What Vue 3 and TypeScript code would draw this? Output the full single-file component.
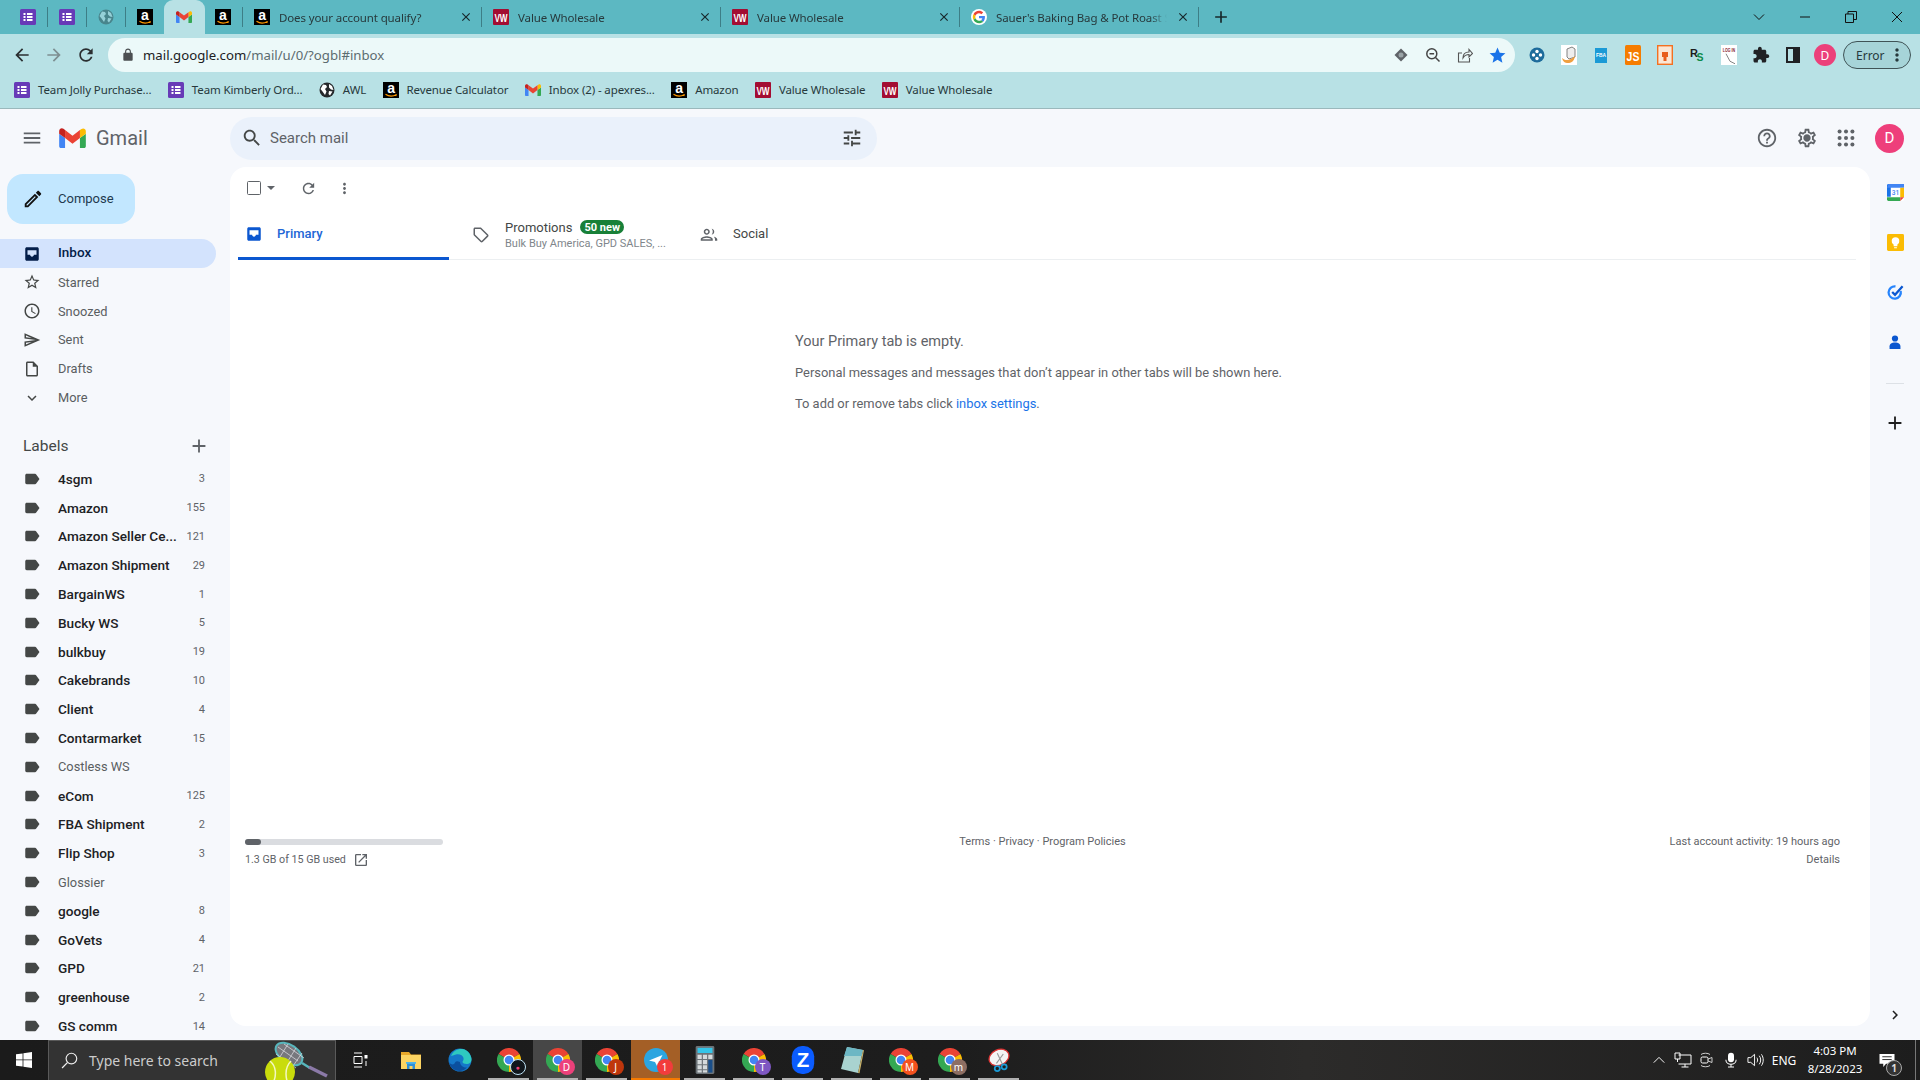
<script setup lang="ts">
const icons: Record<string, string> = {
  back: 'M20 11H7.83l5.59-5.59L12 4l-8 8 8 8 1.41-1.41L7.83 13H20v-2z',
  forward: 'M12 4l-1.41 1.41L16.17 11H4v2h12.17l-5.58 5.59L12 20l8-8z',
  reload: 'M17.65 6.35C16.2 4.9 14.21 4 12 4c-4.42 0-7.99 3.58-7.99 8s3.57 8 7.99 8c3.73 0 6.84-2.55 7.73-6h-2.08c-.82 2.33-3.04 4-5.65 4-3.31 0-6-2.69-6-6s2.69-6 6-6c1.66 0 3.14.69 4.22 1.78L13 11h7V4l-2.35 2.35z',
  lock: 'M18 8h-1V6c0-2.76-2.24-5-5-5S7 3.24 7 6v2H6c-1.1 0-2 .9-2 2v10c0 1.1.9 2 2 2h12c1.1 0 2-.9 2-2V10c0-1.1-.9-2-2-2zm-2.9 0H8.9V6c0-1.71 1.39-3.1 3.1-3.1 1.71 0 3.1 1.39 3.1 3.1v2z',
  star: 'M12 17.27L18.18 21l-1.64-7.03L22 9.24l-7.19-.61L12 2 9.19 8.63 2 9.24l5.46 4.73L5.82 21z',
  puzzle: 'M20.5 11H19V7c0-1.1-.9-2-2-2h-4V3.5C13 2.12 11.88 1 10.5 1S8 2.12 8 3.5V5H4c-1.1 0-1.99.9-1.99 2v3.8H3.5c1.49 0 2.7 1.21 2.7 2.7s-1.21 2.7-2.7 2.7H2V20c0 1.1.9 2 2 2h3.8v-1.5c0-1.49 1.21-2.7 2.7-2.7 1.49 0 2.7 1.21 2.7 2.7V22H17c1.1 0 2-.9 2-2v-4h1.5c1.38 0 2.5-1.12 2.5-2.5S21.88 11 20.5 11z',
  menu: 'M3 18h18v-2H3v2zm0-5h18v-2H3v2zm0-7v2h18V6H3z',
  search: 'M15.5 14h-.79l-.28-.27C15.41 12.59 16 11.11 16 9.5 16 5.91 13.09 3 9.5 3S3 5.91 3 9.5 5.91 16 9.5 16c1.61 0 3.09-.59 4.23-1.57l.27.28v.79l5 4.99L20.49 19l-4.99-5zm-6 0C7.01 14 5 11.99 5 9.5S7.01 5 9.5 5 14 7.01 14 9.5 11.99 14 9.5 14z',
  tune: 'M3 17v2h6v-2H3zM3 5v2h10V5H3zm10 16v-2h8v-2h-8v-2h-2v6h2zM7 9v2H3v2h4v2h2V9H7zm14 4v-2H11v2h10zm-6-4h2V7h4V5h-4V3h-2v6z',
  help: 'M11 18h2v-2h-2v2zm1-16C6.48 2 2 6.48 2 12s4.48 10 10 10 10-4.48 10-10S17.52 2 12 2zm0 18c-4.41 0-8-3.59-8-8s3.59-8 8-8 8 3.59 8 8-3.59 8-8 8zm0-14c-2.21 0-4 1.79-4 4h2c0-1.1.9-2 2-2s2 .9 2 2c0 2-3 1.75-3 5h2c0-2.25 3-2.5 3-5 0-2.21-1.79-4-4-4z',
  settings: 'M19.43 12.98c.04-.32.07-.64.07-.98 0-.34-.03-.66-.07-.98l2.11-1.65c.19-.15.24-.42.12-.64l-2-3.46c-.09-.16-.26-.25-.44-.25-.06 0-.12.01-.17.03l-2.49 1c-.52-.4-1.08-.73-1.69-.98l-.38-2.65C14.46 2.18 14.25 2 14 2h-4c-.25 0-.46.18-.49.42l-.38 2.65c-.61.25-1.17.59-1.69.98l-2.49-1c-.06-.02-.12-.03-.18-.03-.17 0-.34.09-.43.25l-2 3.46c-.13.22-.07.49.12.64l2.11 1.65c-.04.32-.07.65-.07.98 0 .33.03.66.07.98l-2.11 1.65c-.19.15-.24.42-.12.64l2 3.46c.09.16.26.25.44.25.06 0 .12-.01.17-.03l2.49-1c.52.4 1.08.73 1.69.98l.38 2.65c.03.24.24.42.49.42h4c.25 0 .46-.18.49-.42l.38-2.65c.61-.25 1.17-.59 1.69-.98l2.49 1c.06.02.12.03.18.03.17 0 .34-.09.43-.25l2-3.46c.12-.22.07-.49-.12-.64l-2.11-1.65zm-1.98-1.71c.04.31.05.52.05.73 0 .21-.02.43-.05.73l-.14 1.13.89.7 1.08.84-.7 1.21-1.27-.51-1.04-.42-.9.68c-.43.32-.84.56-1.25.73l-1.06.43-.16 1.13-.2 1.35h-1.4l-.19-1.35-.16-1.13-1.06-.43c-.43-.18-.83-.41-1.23-.71l-.91-.7-1.06.43-1.27.51-.7-1.21 1.08-.84.89-.7-.14-1.13c-.03-.31-.05-.54-.05-.74s.02-.43.05-.73l.14-1.13-.89-.7-1.08-.84.7-1.21 1.27.51 1.04.42.9-.68c.43-.32.84-.56 1.25-.73l1.06-.43.16-1.13.2-1.35h1.39l.19 1.35.16 1.13 1.06.43c.43.18.83.41 1.23.71l.91.7 1.06-.43 1.27-.51.7 1.21-1.07.85-.89.7.14 1.13zM12 8c-2.21 0-4 1.79-4 4s1.79 4 4 4 4-1.79 4-4-1.79-4-4-4z',
  edit: 'M14.06 9.02l.92.92L5.92 19H5v-.92l9.06-9.06M17.66 3c-.25 0-.51.1-.7.29l-1.83 1.83 3.75 3.75 1.83-1.83c.39-.39.39-1.02 0-1.41l-2.34-2.34c-.2-.2-.45-.29-.71-.29zm-3.6 3.19L3 17.25V21h3.75L17.81 9.94l-3.75-3.75z',
  inbox: 'M19 3H5c-1.1 0-2 .9-2 2v14c0 1.1.9 2 2 2h14c1.1 0 2-.9 2-2V5c0-1.1-.9-2-2-2zM6 7h12v6h-3.5c0 1.4-1.1 2.5-2.5 2.5S9.5 14.4 9.5 13H6z',
  starred: 'M22 9.24l-7.19-.62L12 2 9.19 8.63 2 9.24l5.46 4.73L5.82 21 12 17.27 18.18 21l-1.63-7.03L22 9.24zM12 15.4l-3.76 2.27 1-4.28-3.32-2.88 4.38-.38L12 6.1l1.71 4.04 4.38.38-3.32 2.88 1 4.28L12 15.4z',
  snoozed: 'M11.99 2C6.47 2 2 6.48 2 12s4.47 10 9.99 10C17.52 22 22 17.52 22 12S17.52 2 11.99 2zM12 20c-4.42 0-8-3.58-8-8s3.58-8 8-8 8 3.58 8 8-3.58 8-8 8zm.5-13H11v6l5.25 3.15.75-1.23-4.5-2.67z',
  sent: 'M4.01 6.03l7.51 3.22-7.52-1 .01-2.22m7.5 8.72L4 17.97v-2.22l7.51-1M2.01 3L2 10l15 2-15 2 .01 7L23 12 2.01 3z',
  drafts: 'M14 2H6c-1.1 0-2 .9-2 2v16c0 1.1.9 2 2 2h12c1.1 0 2-.9 2-2V8l-6-6zM6 20V4h7v5h5v11H6z',
  more: 'M16.59 8.59L12 13.17 7.41 8.59 6 10l6 6 6-6z',
  label: 'M17.63 5.84C17.27 5.33 16.67 5 16 5L5 5.01C3.9 5.01 3 5.9 3 7v10c0 1.1.9 1.99 2 1.99L16 19c.67 0 1.27-.33 1.63-.84L22 12l-4.37-6.16z',
  add: 'M19 13h-6v6h-2v-6H5v-2h6V5h2v6h6v2z',
  close: 'M19 6.41L17.59 5 12 10.59 6.41 5 5 6.41 10.59 12 5 17.59 6.41 19 12 13.41 17.59 19 19 17.59 13.41 12z',
  dots: 'M12 8c1.1 0 2-.9 2-2s-.9-2-2-2-2 .9-2 2 .9 2 2 2zm0 2c-1.1 0-2 .9-2 2s.9 2 2 2 2-.9 2-2-.9-2-2-2zm0 6c-1.1 0-2 .9-2 2s.9 2 2 2 2-.9 2-2-.9-2-2-2z',
  tag: 'M21.41 11.41l-8.83-8.83c-.37-.37-.88-.58-1.41-.58H4c-1.1 0-2 .9-2 2v7.17c0 .53.21 1.04.59 1.41l8.83 8.83c.78.78 2.05.78 2.83 0l7.17-7.17c.78-.78.78-2.04-.01-2.83zM12.83 20L4 11.17V4h7.17L20 12.83 12.83 20z',
  people: 'M9 13c2.2 0 4-1.8 4-4s-1.8-4-4-4-4 1.8-4 4 1.8 4 4 4zm0-6c1.1 0 2 .9 2 2s-.9 2-2 2-2-.9-2-2 .9-2 2-2zm0 8c-2.7 0-8 1.3-8 4v2h16v-2c0-2.7-5.3-4-8-4zm-6 4c.2-.7 3.3-2 6-2s5.8 1.3 6 2H3zM15.5 5.1c.9 1 1.5 2.4 1.5 3.9s-.6 2.9-1.5 3.9c2-.3 3.5-1.9 3.5-3.9s-1.5-3.6-3.5-3.9zM18.5 15.5c1 .9 1.5 2.1 1.5 3.5v2h3v-2c0-1.9-2.4-3-4.5-3.5z',
  open: 'M19 19H5V5h7V3H5a2 2 0 00-2 2v14a2 2 0 002 2h14c1.1 0 2-.9 2-2v-7h-2v7zM14 3v2h3.59l-9.83 9.83 1.41 1.41L19 6.41V10h2V3h-7z',
  right: 'M8.59 16.59L13.17 12 8.59 7.41 10 6l6 6-6 6z',
}

const pinned = [
  { icon: 'forms', sep: true },
  { icon: 'forms', sep: true },
  { icon: 'globe', sep: true, faded: true },
  { icon: 'amazon', sep: false },
  { icon: 'gmail', sep: false, active: true },
  { icon: 'amazon', sep: true },
]

const tabs = [
  { icon: 'amazon', title: 'Does your account qualify?' },
  { icon: 'vw', title: 'Value Wholesale' },
  { icon: 'vw', title: 'Value Wholesale' },
  { icon: 'google', title: "Sauer's Baking Bag & Pot Roast S" },
]

const bookmarks = [
  { icon: 'forms', title: 'Team Jolly Purchase...' },
  { icon: 'forms', title: 'Team Kimberly Ord...' },
  { icon: 'globe', title: 'AWL' },
  { icon: 'amazon', title: 'Revenue Calculator' },
  { icon: 'gmail', title: 'Inbox (2) - apexres...' },
  { icon: 'amazon', title: 'Amazon' },
  { icon: 'vw', title: 'Value Wholesale' },
  { icon: 'vw', title: 'Value Wholesale' },
]

const nav = [
  { name: 'Inbox', icon: 'inbox', active: true },
  { name: 'Starred', icon: 'starred' },
  { name: 'Snoozed', icon: 'snoozed' },
  { name: 'Sent', icon: 'sent' },
  { name: 'Drafts', icon: 'drafts' },
  { name: 'More', icon: 'more' },
]

const labels = [
  ['4sgm', '3'], ['Amazon', '155'], ['Amazon Seller Ce...', '121'], ['Amazon Shipment', '29'],
  ['BargainWS', '1'], ['Bucky WS', '5'], ['bulkbuy', '19'], ['Cakebrands', '10'], ['Client', '4'],
  ['Contarmarket', '15'], ['Costless WS', ''], ['eCom', '125'], ['FBA Shipment', '2'], ['Flip Shop', '3'],
  ['Glossier', ''], ['google', '8'], ['GoVets', '4'], ['GPD', '21'], ['greenhouse', '2'], ['GS comm', '14'],
]

const taskbarApps = [
  { icon: 'folder' },
  { icon: 'edge' },
  { icon: 'chrome', badge: '●', color: '#10161c', running: true, ring: true },
  { icon: 'chrome', badge: 'D', color: '#ec407a', running: true, hover: true },
  { icon: 'chrome', badge: 'J', color: '#bf360c', running: true },
  { icon: 'telegram', badge: '1', color: '#f23c3c', flash: true },
  { icon: 'calc', running: true },
  { icon: 'chrome', badge: 'T', color: '#7e57c2', running: true },
  { icon: 'zoom', running: true },
  { icon: 'notepad', running: true },
  { icon: 'chrome', badge: 'M', color: '#f4511e', running: true },
  { icon: 'chrome', badge: 'm', color: '#8d6e63', running: true },
  { icon: 'snip', running: true },
]
</script>

<template>
  <svg class="defs" aria-hidden="true">
    <symbol id="forms" viewBox="0 0 16 16">
      <rect width="16" height="16" rx="1.5" fill="#673ab7" />
      <path d="M3.5 4h2v2h-2zM7 4h5.5v2H7zM3.5 7h2v2h-2zM7 7h5.5v2H7zM3.5 10h2v2h-2zM7 10h5.5v2H7z" fill="#fff" />
    </symbol>
    <symbol id="amazon" viewBox="0 0 16 16">
      <rect width="16" height="16" fill="#000" />
      <text x="8" y="11" text-anchor="middle" font-family="Liberation Sans" font-weight="700" font-size="14" fill="#fff">a</text>
      <path d="M2.5 12.3c3.5 2.3 7.5 2.3 11 .2l-.9 1.5" fill="none" stroke="#f90" stroke-width="1.2" />
    </symbol>
    <symbol id="vw" viewBox="0 0 16 16">
      <rect width="16" height="16" rx="1" fill="#a30d32" />
      <text x="8" y="12.5" text-anchor="middle" font-family="Liberation Sans" font-weight="700" font-size="11" textLength="13" lengthAdjust="spacingAndGlyphs" fill="#fff">VW</text>
    </symbol>
    <symbol id="globe" viewBox="0 0 16 16">
      <circle cx="8" cy="8" r="7.5" fill="#25282b" />
      <path d="M4 2.5l3 .5 1 2-2 2 1.5 2.5L6 13 3.5 9.5 1.5 7zM10 2l3 2 1.5 4-2.5-.5-2-2zM10 9l3.5.5-2.5 4-1.5-1.5z" fill="#fff" />
    </symbol>
    <symbol id="gmail" viewBox="0 3 52 39">
      <path fill="#4285f4" d="M3.5 42h8V22.6L0 14v24.5C0 40.4 1.6 42 3.5 42z" />
      <path fill="#34a853" d="M40.5 42h8c1.9 0 3.5-1.6 3.5-3.5V14l-11.5 8.6z" />
      <path fill="#fbbc04" d="M40.5 7v15.6L52 14V9.3c0-4.3-4.9-6.8-8.4-4.2z" />
      <path fill="#ea4335" d="M11.5 22.6V7L26 17.9 40.5 7v15.6L26 33.5z" />
      <path fill="#c5221f" d="M0 9.3V14l11.5 8.6V7L8.4 4.7C4.9 2.1 0 4.6 0 9.3z" />
    </symbol>
    <symbol id="google" viewBox="-7 -7 62 62">
      <circle cx="24" cy="24" r="31" fill="#fff" />
      <path fill="#ea4335" d="M24 9.5c3.54 0 6.71 1.22 9.21 3.6l6.85-6.85C35.9 2.38 30.47 0 24 0 14.62 0 6.51 5.38 2.56 13.22l7.98 6.19C12.43 13.72 17.74 9.5 24 9.5z" />
      <path fill="#4285f4" d="M46.98 24.55c0-1.57-.15-3.09-.38-4.55H24v9.02h12.94c-.58 2.96-2.26 5.48-4.78 7.18l7.73 6c4.51-4.18 7.09-10.36 7.09-17.65z" />
      <path fill="#fbbc05" d="M10.53 28.59c-.48-1.45-.76-2.99-.76-4.59s.27-3.14.76-4.59l-7.98-6.19C.92 16.46 0 20.12 0 24c0 3.88.92 7.54 2.56 10.78l7.97-6.19z" />
      <path fill="#34a853" d="M24 48c6.48 0 11.93-2.13 15.89-5.81l-7.73-6c-2.15 1.45-4.92 2.3-8.16 2.3-6.26 0-11.57-4.22-13.47-9.91l-7.98 6.19C6.51 42.62 14.62 48 24 48z" />
    </symbol>
    <symbol id="chrome" viewBox="0 0 24 24">
      <path fill="#ea4335" d="M12 12L1.6 6A12 12 0 0 1 22.4 6z" />
      <path fill="#fbbc04" d="M12 12L22.4 6A12 12 0 0 1 12 24z" />
      <path fill="#34a853" d="M12 12L12 24A12 12 0 0 1 1.6 6z" />
      <circle cx="12" cy="12" r="5.5" fill="#fff" />
      <circle cx="12" cy="12" r="4.3" fill="#4285f4" />
    </symbol>
    <symbol id="folder" viewBox="0 0 24 24">
      <path d="M2 4h8l2 2.5h10V8H2z" fill="#e8a82a" />
      <path d="M2 7h20v14H2z" fill="#fcd462" />
      <path d="M8 21v-6h8v6h-2.5v-3h-3v3z" fill="#2f8fd6" />
      <path d="M7 14h10v1.8H7z" fill="#4db4e8" />
    </symbol>
    <symbol id="edge" viewBox="0 0 24 24">
      <circle cx="12" cy="12" r="11.5" fill="#1578c9" />
      <path d="M3 8c2-5 7-7.5 11-7 5 .5 9 5 9.5 10 .2 3-2 5-5 5-2 0-4-.7-4-2 0-1 1.5-1.5 1-4C15 7 11 5.5 8 6.5 5.5 7 4 8 3 8z" fill="#2ec9c0" />
      <path d="M12 14c0 3 3 6 7 5.5-2 2.5-5 3.5-7.5 3.5C7 23 2 20 1 14c1 2 3.5 3 5 2 1.5-1 1-4 6-2z" fill="#0b4f9e" />
    </symbol>
    <symbol id="telegram" viewBox="0 0 24 24">
      <circle cx="12" cy="12" r="12" fill="#2ca5e0" />
      <path d="M5 12.5L18.5 7 13 18l-2-4z" fill="#fff" />
    </symbol>
    <symbol id="calc" viewBox="0 0 24 30">
      <rect x="2" width="20" height="30" rx="1.5" fill="#6c7378" />
      <rect x="4" y="2" width="16" height="5.5" fill="#35c5e8" />
      <path d="M4 9.5h4.5V14H4zM9.8 9.5h4.4V14H9.8zM15.5 9.5H20V14h-4.5zM4 15h4.5v4.5H4zM9.8 15h4.4v4.5H9.8zM4 20.5h4.5V25H4zM9.8 20.5h4.4V25H9.8zM4 26h4.5v2.5H4zM9.8 26h4.4v2.5H9.8z" fill="#d5dadc" />
      <path d="M15.5 15H20v13.5h-4.5z" fill="#1a4f8a" />
    </symbol>
    <symbol id="zoom" viewBox="0 0 24 30">
      <rect width="24" height="30" rx="11" fill="#0b5cff" />
      <text x="12" y="22.5" text-anchor="middle" font-family="Liberation Sans" font-weight="700" font-size="22" fill="#fff">Z</text>
    </symbol>
    <symbol id="notepad" viewBox="0 0 24 28">
      <path d="M7 1l16 3-5 23L1 23z" fill="#a9d3d0" />
      <path d="M7 1l16 3-1.5 6L4 10z" fill="#6db7c4" />
      <path d="M18 27l5-23 1 .3-4.5 23z" fill="#c8b26a" />
    </symbol>
    <symbol id="snip" viewBox="0 0 28 28">
      <ellipse cx="14" cy="11" rx="12" ry="9" transform="rotate(-25 14 11)" fill="#f4f4f4" stroke="#d33" stroke-width="1.5" />
      <path d="M12 6l6 13M19 7l-8 11" stroke="#999" stroke-width="1.3" />
      <circle cx="20" cy="22" r="3" fill="none" stroke="#1a9bd7" stroke-width="2" />
      <circle cx="12" cy="24" r="3" fill="none" stroke="#1a9bd7" stroke-width="2" />
    </symbol>
  </svg>

  <div class="screen">
    <div class="tabstrip">
      <div
        v-for="(p, i) in pinned"
        :key="i"
        class="pin"
        :class="{ active: p.active, sep: p.sep, faded: p.faded }"
      >
        <svg class="fav"><use :href="'#' + p.icon" /></svg>
      </div>
      <div v-for="(t, i) in tabs" :key="i" class="tab sep">
        <svg class="fav"><use :href="'#' + t.icon" /></svg>
        <span class="tab-title">{{ t.title }}</span>
        <svg class="tab-close" viewBox="0 0 24 24"><path :d="icons.close" /></svg>
      </div>
      <svg class="newtab" viewBox="0 0 24 24"><path :d="icons.add" /></svg>
      <div class="winctl">
        <span class="winbtn">
          <svg viewBox="0 0 12 12" width="12" height="12"><path d="M1 3.5l5 5 5-5" fill="none" stroke="#111" /></svg>
        </span>
        <span class="winbtn">
          <svg viewBox="0 0 12 12" width="12" height="12"><path d="M1 6h10" stroke="#111" /></svg>
        </span>
        <span class="winbtn">
          <svg viewBox="0 0 12 12" width="12" height="12"><path d="M.5 3h8v8.5h-8zM3 3V.5h8.5v8h-3" fill="none" stroke="#111" /></svg>
        </span>
        <span class="winbtn">
          <svg viewBox="0 0 12 12" width="12" height="12"><path d="M1 1l10 10M11 1L1 11" stroke="#111" /></svg>
        </span>
      </div>
    </div>

    <div class="toolbar">
      <span class="navbtn"><svg viewBox="0 0 24 24"><path :d="icons.back" /></svg></span>
      <span class="navbtn dim"><svg viewBox="0 0 24 24"><path :d="icons.forward" /></svg></span>
      <span class="navbtn"><svg viewBox="0 0 24 24"><path :d="icons.reload" /></svg></span>
      <div class="omnibox">
        <svg class="lock" viewBox="0 0 24 24"><path :d="icons.lock" /></svg>
        <span class="url"><b>mail.google.com</b>/mail/u/0/?ogbl#inbox</span>
        <span class="omni-btn">
          <svg viewBox="0 0 16 16" width="16" height="16"><path d="M8 1.5L14.5 8 8 14.5 1.5 8z" fill="#5f6368" /><circle cx="8" cy="8" r="2.5" fill="#9aa3a6" /></svg>
        </span>
        <span class="omni-btn">
          <svg viewBox="0 0 16 16" width="16" height="16"><circle cx="6.8" cy="6.8" r="5" fill="none" stroke="#444" stroke-width="1.5" /><path d="M4.5 6.8h4.6M10.5 10.5l4 4" stroke="#444" stroke-width="1.5" /></svg>
        </span>
        <span class="omni-btn">
          <svg viewBox="0 0 16 16" width="16" height="16"><path d="M5 6H1.5v9h11v-4M6 11c0-4 2.5-6 6-6V2.5l3.5 4-3.5 3.5V7.5C9.5 7.5 7.5 8.5 6 11z" fill="none" stroke="#555" stroke-width="1.1" /></svg>
        </span>
        <span class="omni-btn star"><svg viewBox="0 0 24 24"><path :d="icons.star" /></svg></span>
      </div>
      <span class="ext">
        <svg viewBox="0 0 16 16" width="16" height="16"><circle cx="8" cy="8" r="7.5" fill="#1d6b9b" /><circle cx="8" cy="4.5" r="1.7" fill="#fff" /><circle cx="8" cy="11.5" r="1.7" fill="#fff" /><circle cx="4.5" cy="8" r="1.7" fill="#fff" /><circle cx="11.5" cy="8" r="1.7" fill="#fff" /></svg>
      </span>
      <span class="ext">
        <svg viewBox="0 0 16 20" width="16" height="20"><rect width="16" height="20" fill="#fff" /><path d="M6 4l5-2 3 2v8l-6 2-2-2z" fill="#eee" stroke="#666" stroke-width=".8" /><path d="M1 13c3 3 8 3 13-2-1 6-4 7-7 7-3 0-5-1-6-5z" fill="#f0a040" /></svg>
      </span>
      <span class="ext">
        <svg viewBox="0 0 16 16" width="12" height="15" preserveAspectRatio="none"><rect width="16" height="16" fill="#1b9ad6" /><text x="8" y="10" text-anchor="middle" font-family="Liberation Sans" font-weight="700" font-size="6.5" fill="#fff">FBA</text></svg>
      </span>
      <span class="ext">
        <svg viewBox="0 0 16 16" width="16" height="20" preserveAspectRatio="none"><rect width="16" height="16" rx="1.5" fill="#f57c00" /><text x="8" y="12.5" text-anchor="middle" font-family="Liberation Sans" font-weight="700" font-size="10.5" fill="#fff">JS</text></svg>
      </span>
      <span class="ext">
        <svg viewBox="0 0 16 20" width="16" height="20"><rect x=".7" y=".7" width="14.6" height="18.6" fill="#fbe6d4" stroke="#f37021" stroke-width="1.4" /><path d="M5 7h6v5H9.5v4h-3v-4H5z" fill="#e85d1c" /></svg>
      </span>
      <span class="ext">
        <svg viewBox="0 0 16 16" width="16" height="16"><text x="1" y="10" font-family="Liberation Sans" font-weight="700" font-size="11" fill="#1c1c1c">R</text><text x="7.5" y="14" font-family="Liberation Sans" font-weight="700" font-size="10.5" fill="#0d8a4a">S</text></svg>
      </span>
      <span class="ext">
        <svg viewBox="0 0 16 16" width="16" height="20" preserveAspectRatio="none"><rect width="16" height="16" fill="#fff" /><text x="8" y="6" text-anchor="middle" font-family="Liberation Sans" font-weight="700" font-size="3.6" fill="#8a2030">LOG IN</text><path d="M5 7l4 6 5 2" fill="none" stroke="#777" stroke-width=".8" /></svg>
      </span>
      <span class="ext puzzle"><svg viewBox="0 0 24 24"><path :d="icons.puzzle" /></svg></span>
      <span class="ext">
        <svg viewBox="0 0 14 16" width="14" height="16"><rect width="14" height="16" fill="#202124" /><rect x="2" y="2" width="5" height="12" fill="#b8e1e5" /></svg>
      </span>
      <span class="ext"><span class="chrome-avatar">D</span></span>
      <div class="errorpill">
        <span>Error</span>
        <svg viewBox="0 0 24 24"><path :d="icons.dots" /></svg>
      </div>
    </div>

    <div class="bookmarks">
      <span v-for="(b, i) in bookmarks" :key="i" class="bookmark">
        <svg class="fav"><use :href="'#' + b.icon" /></svg>
        {{ b.title }}
      </span>
    </div>

    <div class="gmail">
      <header class="g-header">
        <div class="brand">
          <svg class="g-ic menu" viewBox="0 0 24 24"><path :d="icons.menu" /></svg>
          <svg class="g-logo"><use href="#gmail" /></svg>
          <span class="wordmark">Gmail</span>
        </div>
        <div class="searchbar">
          <svg class="g-ic" viewBox="0 0 24 24"><path :d="icons.search" /></svg>
          <span class="search-text">Search mail</span>
          <svg class="g-ic tune" viewBox="0 0 24 24"><path :d="icons.tune" /></svg>
        </div>
        <div class="g-actions">
          <span class="action"><svg class="g-ic" viewBox="0 0 24 24"><path :d="icons.help" /></svg></span>
          <span class="action"><svg class="g-ic" viewBox="0 0 24 24"><path :d="icons.settings" /></svg></span>
          <span class="action">
            <svg class="g-ic" viewBox="0 0 24 24">
              <template v-for="y in [5, 12, 19]" :key="y">
                <circle v-for="x in [5, 12, 19]" :key="x" :cx="x" :cy="y" r="2.2" />
              </template>
            </svg>
          </span>
          <span class="g-avatar">D</span>
        </div>
      </header>

      <div class="g-body">
        <aside class="sidebar">
          <div class="compose">
            <svg viewBox="0 0 24 24"><path :d="icons.edit" /></svg>
            <span class="compose-text">Compose</span>
          </div>
          <nav class="nav">
            <div v-for="n in nav" :key="n.name" class="row" :class="{ current: n.active }">
              <svg viewBox="0 0 24 24"><path :d="icons[n.icon]" /></svg>
              <span class="row-name">{{ n.name }}</span>
            </div>
          </nav>
          <div class="labels-head">
            <span>Labels</span>
            <svg viewBox="0 0 24 24"><path :d="icons.add" /></svg>
          </div>
          <div class="labels">
            <div v-for="[name, count] in labels" :key="name" class="row label" :class="{ unread: count }">
              <svg viewBox="0 0 24 24"><path :d="icons.label" /></svg>
              <span class="row-name">{{ name }}</span>
              <span class="count">{{ count }}</span>
            </div>
          </div>
        </aside>

        <main class="card">
          <div class="mailbar">
            <span class="checkbox"></span>
            <span class="caret"></span>
            <svg class="bar-ic refresh" viewBox="0 0 24 24"><path :d="icons.reload" /></svg>
            <svg class="bar-ic kebab" viewBox="0 0 24 24"><path :d="icons.dots" /></svg>
          </div>

          <div class="cats">
            <div class="cat primary">
              <svg viewBox="0 0 24 24"><path :d="icons.inbox" /></svg>
              <span class="cat-name">Primary</span>
            </div>
            <div class="cat promos">
              <svg viewBox="0 0 24 24"><path :d="icons.tag" /></svg>
              <div>
                <div class="cat-line">
                  <span class="cat-name">Promotions</span>
                  <span class="new-badge">50 new</span>
                </div>
                <div class="cat-sub">Bulk Buy America, GPD SALES, ...</div>
              </div>
            </div>
            <div class="cat social">
              <svg viewBox="0 0 24 24"><path :d="icons.people" /></svg>
              <span class="cat-name">Social</span>
            </div>
          </div>

          <section class="empty">
            <h2>Your Primary tab is empty.</h2>
            <p>Personal messages and messages that don’t appear in other tabs will be shown here.</p>
            <p>To add or remove tabs click <a>inbox settings</a>.</p>
          </section>

          <footer class="g-footer">
            <div>
              <div class="quota"><div class="quota-fill"></div></div>
              <div class="quota-text">
                1.3 GB of 15 GB used
                <svg viewBox="0 0 24 24"><path :d="icons.open" /></svg>
              </div>
            </div>
            <div class="terms">Terms · Privacy · Program Policies</div>
            <div class="activity">
              <div>Last account activity: 19 hours ago</div>
              <div>Details</div>
            </div>
          </footer>
        </main>

        <aside class="rail">
          <span class="rail-item">
            <svg viewBox="0 0 18 18" width="17" height="17">
              <rect width="18" height="18" rx="1.5" fill="#fff" />
              <path d="M0 13.5V1.5A1.5 1.5 0 0 1 1.5 0H4v13.5z" fill="#1a73e8" />
              <path d="M1.5 0H18v4H0z" fill="#4285f4" />
              <path d="M14 4h4v10h-4z" fill="#fbbc04" />
              <path d="M0 14h14v4H1.5A1.5 1.5 0 0 1 0 16.5z" fill="#34a853" />
              <path d="M14 14h4l-4 4z" fill="#ea4335" />
              <text x="9" y="12" text-anchor="middle" font-family="Roboto" font-weight="500" font-size="7" fill="#4285f4">31</text>
            </svg>
          </span>
          <span class="rail-item">
            <svg viewBox="0 0 18 18" width="17" height="17">
              <rect width="18" height="18" rx="1.5" fill="#fbbc04" />
              <circle cx="9" cy="7.5" r="4" fill="#fff" />
              <path d="M7 10h4v3H7zM7.5 14h3v1h-3z" fill="#fff" />
            </svg>
          </span>
          <span class="rail-item">
            <svg viewBox="0 0 18 18" width="17" height="17">
              <path d="M14.5 7.5A6.5 6.5 0 1 1 9 2.5" fill="none" stroke="#2684fc" stroke-width="2.4" />
              <path d="M5.5 8.5L8.5 11.5 16.5 2.5" fill="none" stroke="#0b57d0" stroke-width="2.4" />
            </svg>
          </span>
          <span class="rail-item">
            <svg viewBox="0 0 18 18" width="14" height="16">
              <circle cx="9" cy="4.5" r="4" fill="#0b57d0" />
              <path d="M2 18v-3.5C2 11 5 9.5 9 9.5s7 1.5 7 5V18z" fill="#0b57d0" />
            </svg>
          </span>
          <span class="rail-div"></span>
          <span class="rail-item plus"><svg viewBox="0 0 24 24"><path :d="icons.add" /></svg></span>
          <span class="rail-item collapse"><svg viewBox="0 0 24 24"><path :d="icons.right" /></svg></span>
        </aside>
      </div>
    </div>

    <div class="taskbar">
      <span class="win">
        <svg viewBox="0 0 16 16" width="16" height="16"><path d="M0 2.3L6.6 1.4v6.1H0zM7.4 1.3L16 0v7.5H7.4zM0 8.3h6.6v6.3L0 13.7zM7.4 8.3H16V16l-8.6-1.3z" fill="#fff" /></svg>
      </span>
      <div class="tb-search">
        <svg viewBox="0 0 16 16" width="17" height="17"><circle cx="9.8" cy="6.2" r="5" fill="none" stroke="#eee" stroke-width="1.1" /><path d="M6 10L1 15" stroke="#eee" stroke-width="1.2" /></svg>
        <span>Type here to search</span>
        <svg class="racket" viewBox="0 0 66 40" width="66" height="40">
          <ellipse cx="25" cy="13" rx="15" ry="9" transform="rotate(35 25 13)" fill="#77777d" stroke="#58b7bd" stroke-width="2" />
          <path d="M14 6l20 14M20 3l20 14M12 13l20 14M24 3l-10 16M32 7l-10 16M38 12l-9 13" stroke="#d6d6da" stroke-width=".8" />
          <path d="M38 22l8 5" stroke="#58b7bd" stroke-width="2.5" />
          <path d="M45 26l18 9" stroke="#8c7aa8" stroke-width="3.5" />
          <circle cx="16" cy="31" r="15" fill="#c9dc0c" />
          <path d="M6 20c6 5 7 14 3 22M27 20c-5 5-6 12-4 20" fill="none" stroke="#f4f7c0" stroke-width="1.5" />
        </svg>
      </div>
      <span class="tb-item taskview">
        <svg viewBox="0 0 16 16" width="16" height="16"><path d="M2 1h8M2 15h8M2 4.5h8v7H2z" fill="none" stroke="#fff" /><rect x="12.5" y="3" width="3" height="3.5" fill="#fff" /><path d="M14 9v5" stroke="#fff" /></svg>
      </span>
      <span
        v-for="(a, i) in taskbarApps"
        :key="i"
        class="tb-item"
        :class="{ running: a.running, hovered: a.hover, flash: a.flash }"
      >
        <span class="tb-app" :class="a.icon">
          <svg><use :href="'#' + a.icon" /></svg>
          <span v-if="a.badge" class="tb-badge" :class="{ ring: a.ring }" :style="{ background: a.color }">{{ a.badge }}</span>
        </span>
      </span>
      <div class="tray">
        <span class="tray-ic">
          <svg viewBox="0 0 16 16" width="14" height="14"><path d="M2 11l6-6 6 6" fill="none" stroke="#fff" stroke-width="1.1" /></svg>
        </span>
        <span class="tray-ic">
          <svg viewBox="0 0 18 16" width="18" height="16"><path d="M4.5 3H17v9H4.5M11 12v3M7.5 15h7M1 1h5v6H1zM3.5 7v3" fill="none" stroke="#fff" /></svg>
        </span>
        <span class="tray-ic">
          <svg viewBox="0 0 14 16" width="14" height="16"><rect x="1" y="5" width="7" height="6" rx="1.5" fill="none" stroke="#fff" /><path d="M8 7l4-1.5v5L8 9M1 2.5C3 .8 8 .8 10 2.5M1 13.5c2 1.7 7 1.7 9 0" fill="none" stroke="#ccc" /></svg>
        </span>
        <span class="tray-ic">
          <svg viewBox="0 0 14 18" width="12" height="17"><rect x="3.5" y="0" width="7" height="11" rx="3.5" fill="#fff" /><path d="M1 8c0 7 12 7 12 0M7 13v3M3.5 16.5h7" fill="none" stroke="#fff" stroke-width="1.2" /></svg>
        </span>
        <span class="tray-ic">
          <svg viewBox="0 0 18 16" width="17" height="16"><path d="M1 5.5h3L8 2v12L4 10.5H1zM10.5 5.5c1 1.5 1 3.5 0 5M13 3.5c2 2.5 2 6.5 0 9M15.3 2c2.5 3.5 2.5 8.5 0 12" fill="none" stroke="#fff" /></svg>
        </span>
        <span class="lang">ENG</span>
        <div class="clock">
          <div>4:03 PM</div>
          <div>8/28/2023</div>
        </div>
        <span class="notif">
          <svg viewBox="0 0 16 16" width="16" height="15"><path d="M0 1h16v10.5H7L4 15v-3.5H0z" fill="#fff" /><path d="M3 4h10M3 7h10" stroke="#222" /></svg>
          <span class="notif-count">1</span>
        </span>
        <span class="show-desktop"></span>
      </div>
    </div>
  </div>
</template>

<style>
html,
body {
  margin: 0;
  overflow: hidden;
}
</style>

<style scoped>
.defs {
  display: none;
}

.screen {
  width: 1920px;
  height: 1080px;
  display: flex;
  flex-direction: column;
  overflow: hidden;
  font-family: "Noto Sans", "Liberation Sans", sans-serif;
  color: #202124;
}

.fav {
  width: 16px;
  height: 16px;
  flex: none;
}

/* browser tabs */
.tabstrip {
  height: 34px;
  flex: none;
  display: flex;
  padding-left: 8.5px;
  background: #5cb8c2;
}

.pin,
.tab {
  position: relative;
  display: flex;
  align-items: center;
  height: 34px;
  box-sizing: border-box;
}

.pin {
  width: 39px;
  justify-content: center;
}

.pin.active {
  width: 41px;
  margin: 0 -1px;
  background: #b8e1e5;
  border-radius: 9px 9px 0 0;
}

.pin.faded .fav {
  opacity: 0.35;
}

.sep::after {
  content: "";
  position: absolute;
  right: 0;
  top: 7px;
  width: 1px;
  height: 20px;
  background: #3d7e86;
}

.tab {
  width: 239px;
  padding: 0 9px 0 11.5px;
  gap: 9px;
  font-size: 11.5px;
  letter-spacing: -0.12px;
  color: #27393c;
}

.tab-title {
  flex: 1;
  min-width: 0;
  overflow: hidden;
  white-space: nowrap;
  -webkit-mask-image: linear-gradient(to right, #000 90%, transparent);
  mask-image: linear-gradient(to right, #000 90%, transparent);
}

.tab-close {
  width: 14px;
  height: 14px;
  flex: none;
  fill: #17282b;
}

.newtab {
  width: 20px;
  height: 20px;
  margin: 7px 0 0 12px;
  fill: #17282b;
}

.winctl {
  display: flex;
  margin-left: auto;
}

.winbtn {
  width: 46px;
  height: 34px;
  display: flex;
  align-items: center;
  justify-content: center;
}

/* address bar row */
.toolbar {
  height: 42px;
  flex: none;
  display: flex;
  align-items: center;
  padding: 0 9px 0 6px;
  background: #b8e1e5;
}

.navbtn {
  width: 32px;
  display: flex;
  justify-content: center;
}

.navbtn svg {
  width: 20px;
  height: 20px;
  fill: #2a2e30;
}

.navbtn.dim svg {
  fill: #7d8e91;
}

.omnibox {
  flex: 1;
  height: 34px;
  margin: 0 6px;
  display: flex;
  align-items: center;
  padding: 0 2px 0 13px;
  background: #ecf9f9;
  border-radius: 17px;
}

.lock {
  width: 14px;
  height: 14px;
  fill: #4b4f52;
}

.url {
  flex: 1;
  margin-left: 8px;
  font-size: 13.2px;
  color: #5c6c70;
}

.url b {
  font-weight: 400;
  color: #202124;
}

.omni-btn {
  width: 32px;
  display: flex;
  justify-content: center;
}

.omni-btn.star svg {
  width: 19px;
  height: 19px;
  fill: #1a73e8;
}

.ext {
  width: 32px;
  height: 24px;
  display: flex;
  align-items: center;
  justify-content: center;
}

.ext.puzzle svg {
  width: 18px;
  height: 18px;
  fill: #202124;
}

.chrome-avatar {
  width: 22px;
  height: 22px;
  display: flex;
  align-items: center;
  justify-content: center;
  border-radius: 50%;
  background: #ec407a;
  color: #fff;
  font-size: 12px;
}

.errorpill {
  width: 68px;
  height: 28px;
  box-sizing: border-box;
  margin-left: 2px;
  display: flex;
  align-items: center;
  justify-content: space-between;
  padding: 0 3px 0 12px;
  border: 1px solid #3f5356;
  border-radius: 14px;
  background: #a6d4d8;
  font-size: 12px;
  color: #27393c;
}

.errorpill svg {
  width: 20px;
  height: 20px;
  fill: #27393c;
}

.bookmarks {
  height: 33px;
  flex: none;
  box-sizing: border-box;
  display: flex;
  align-items: center;
  gap: 16.4px;
  padding: 0 0 5px 14px;
  background: #b8e1e5;
  border-bottom: 1px solid #9ab8bc;
}

.bookmark {
  display: flex;
  align-items: center;
  gap: 8px;
  font-size: 11.5px;
  letter-spacing: -0.12px;
  color: #27393c;
  white-space: nowrap;
}

/* gmail */
.gmail {
  flex: 1;
  min-height: 0;
  display: flex;
  flex-direction: column;
  background: #f6f8fc;
  font-family: Roboto, "Liberation Sans", sans-serif;
  color: #444746;
}

.g-header {
  height: 58px;
  flex: none;
  display: flex;
  align-items: center;
}

.g-ic {
  width: 22px;
  height: 22px;
  fill: #5f6368;
}

.brand {
  width: 230px;
  display: flex;
  align-items: center;
  padding-left: 21px;
  box-sizing: border-box;
}

.g-logo {
  width: 27px;
  height: 20px;
  margin-left: 16px;
}

.wordmark {
  margin-left: 10px;
  font-size: 20px;
  color: #5f6368;
}

.searchbar {
  width: 647px;
  height: 43px;
  box-sizing: border-box;
  display: flex;
  align-items: center;
  padding: 0 14px 0 11px;
  background: #eaf1fb;
  border-radius: 22px;
}

.search-text {
  flex: 1;
  margin-left: 7px;
  font-size: 15px;
  color: #5f6368;
}

.searchbar .g-ic {
  fill: #444746;
}

.g-actions {
  margin-left: auto;
  display: flex;
  align-items: center;
  padding-right: 16px;
}

.action {
  width: 39.5px;
  display: flex;
  justify-content: center;
}

.g-avatar {
  width: 29px;
  height: 29px;
  margin-left: 9px;
  display: flex;
  align-items: center;
  justify-content: center;
  border-radius: 50%;
  background: #ee3f7b;
  color: #fff;
  font-size: 15px;
}

.g-body {
  flex: 1;
  min-height: 0;
  display: flex;
}

.sidebar {
  width: 230px;
  flex: none;
  padding-top: 7px;
  box-sizing: border-box;
  overflow: hidden;
}

.compose {
  width: 128px;
  height: 50px;
  margin-left: 7px;
  box-sizing: border-box;
  display: flex;
  align-items: center;
  gap: 14px;
  padding-left: 15px;
  background: #c2e7ff;
  border-radius: 16px;
  font-size: 13px;
  color: #1f3a4f;
}

.compose-text {
  margin-top: -2px;
}

.compose svg {
  width: 22px;
  height: 22px;
  fill: #111;
}

.nav {
  margin-top: 15px;
}

.row {
  width: 216px;
  height: 28.8px;
  box-sizing: border-box;
  display: flex;
  align-items: center;
  gap: 16px;
  padding: 0 11px 0 22px;
  font-size: 12.8px;
  color: #5a5e61;
  border-radius: 0 15px 15px 0;
}

.row svg {
  width: 18px;
  height: 18px;
  margin: 0 1px;
  flex: none;
  fill: #444746;
}

.row.current {
  height: 29px;
  background: #d3e3fd;
  color: #041e49;
  font-size: 13.5px;
  font-weight: 500;
}

.row.current svg {
  fill: #041e49;
}

.row.current .row-name {
  margin-top: -3px;
}

.row-name {
  min-width: 0;
  white-space: nowrap;
}

.labels-head {
  width: 216px;
  height: 28px;
  margin-top: 20px;
  box-sizing: border-box;
  display: flex;
  align-items: center;
  justify-content: space-between;
  padding: 0 6px 0 23px;
  font-size: 15.5px;
  color: #444746;
}

.labels-head svg {
  width: 22px;
  height: 22px;
  fill: #5f6368;
}

.labels {
  margin-top: 4.5px;
}

.label.unread {
  color: #202124;
  font-size: 13.6px;
  font-weight: 500;
}

.count {
  margin-left: auto;
  font-size: 11px;
  font-weight: 400;
  color: #5f6368;
}

.card {
  flex: 1;
  min-width: 0;
  margin-bottom: 14px;
  display: flex;
  flex-direction: column;
  background: #fff;
  border-radius: 16px;
}

.mailbar {
  height: 42px;
  flex: none;
  display: flex;
  align-items: center;
  padding-left: 17px;
}

.checkbox {
  width: 12px;
  height: 12px;
  border: 1.5px solid #5f6368;
  border-radius: 1.5px;
}

.caret {
  margin-left: 6px;
  border: 4px solid transparent;
  border-top-color: #5f6368;
  border-bottom: 0;
}

.bar-ic {
  width: 17px;
  height: 17px;
  fill: #5f6368;
}

.refresh {
  margin-left: 25px;
}

.kebab {
  margin-left: 19px;
}

.cats {
  height: 51px;
  flex: none;
  margin: 0 14px 0 8px;
  box-sizing: border-box;
  display: flex;
  border-bottom: 1px solid #eceff1;
}

.cat {
  height: 51px;
  flex: none;
  box-sizing: border-box;
  display: flex;
  align-items: center;
  gap: 14px;
  padding-left: 6px;
  font-size: 13px;
  color: #444746;
}

.cat svg {
  width: 18px;
  height: 18px;
  fill: #5f6368;
}

.cat.primary {
  width: 211px;
  padding-left: 7px;
  padding-top: 1px;
  border-bottom: 3px solid #0b57d0;
  color: #2266d6;
  font-weight: 500;
}

.cat.primary svg {
  fill: #0b57d0;
}

.cat.promos {
  width: 227px;
  margin-left: 17px;
  gap: 15px;
}

.cat.social {
  margin-left: 1px;
  gap: 15px;
  padding-bottom: 2px;
}

.cat-line {
  display: flex;
  align-items: center;
  gap: 8px;
}

.new-badge {
  height: 14px;
  padding: 0 4px;
  display: flex;
  align-items: center;
  background: #188038;
  border-radius: 7px;
  color: #fff;
  font-size: 11px;
  font-weight: 700;
}

.cat-sub {
  margin-top: 2px;
  font-size: 11px;
  color: #80868b;
  white-space: nowrap;
}

.empty {
  padding: 72px 0 0 565px;
  font-size: 12.9px;
  line-height: 20px;
  color: #5f6368;
}

.empty h2 {
  margin: 0;
  font-size: 14.5px;
  font-weight: 400;
  line-height: 20px;
}

.empty p {
  margin: 11px 0 0;
}

.empty a {
  color: #1a73e8;
}

.g-footer {
  margin-top: 419px;
  display: grid;
  grid-template-columns: 1fr auto 1fr;
  padding: 0 30px 0 15px;
  font-size: 11px;
  line-height: 18px;
  color: #5f6368;
}

.quota {
  width: 198px;
  height: 6px;
  margin: 6px 0;
  background: #dadce0;
  border-radius: 3px;
}

.quota-fill {
  width: 16px;
  height: 6px;
  background: #5f6368;
  border-radius: 3px;
}

.quota-text {
  display: flex;
  align-items: center;
  gap: 7px;
  font-size: 10.7px;
}

.quota-text svg {
  width: 16px;
  height: 16px;
  fill: #5f6368;
}

.activity {
  text-align: right;
}

.rail {
  width: 50px;
  flex: none;
  display: flex;
  flex-direction: column;
  align-items: center;
}

.rail-item {
  height: 50px;
  display: flex;
  align-items: center;
}

.rail-div {
  width: 18px;
  height: 1px;
  margin: 16px 0 14px;
  background: #dde1e6;
}

.plus svg {
  width: 22px;
  height: 22px;
  fill: #1f1f1f;
}

.collapse {
  margin-top: auto;
}

.collapse svg {
  width: 18px;
  height: 18px;
  fill: #1f1f1f;
}

/* windows taskbar */
.taskbar {
  height: 40px;
  flex: none;
  display: flex;
  background: linear-gradient(to right, #1b1b1b, #1d1d1d 50%, #2c2b2a 68%, #1d1d1d);
  font-family: "Noto Sans", "Liberation Sans", sans-serif;
  color: #fff;
}

.win {
  width: 48px;
  display: flex;
  align-items: center;
  justify-content: center;
}

.tb-search {
  position: relative;
  width: 287.5px;
  box-sizing: border-box;
  display: flex;
  align-items: center;
  gap: 11px;
  padding-left: 12px;
  background: #333;
  border: 1px solid #5a5a5a;
  border-width: 1px 1px 0;
  font-size: 14px;
  color: #ccc;
  overflow: hidden;
}

.racket {
  position: absolute;
  right: 5px;
  top: 0;
}

.tb-item {
  position: relative;
  width: 49px;
  flex: none;
  display: flex;
  align-items: center;
  justify-content: center;
}

.taskview {
  margin-right: 1.5px;
}

.tb-item.running::after {
  content: "";
  position: absolute;
  left: 4px;
  right: 4px;
  bottom: 0;
  height: 2px;
  background: #b0b0b0;
}

.tb-item.hovered {
  background: #474747;
}

.tb-item.flash {
  background: #a45f26;
}

.tb-item.flash::after {
  content: "";
  position: absolute;
  left: 0;
  right: 0;
  bottom: 0;
  height: 2px;
  background: #f67a00;
}

.tb-app {
  position: relative;
  width: 24px;
  height: 24px;
  display: flex;
}

.tb-app svg {
  width: 100%;
  height: 100%;
}

.tb-app.calc,
.tb-app.zoom,
.tb-app.notepad {
  height: 28px;
}

.tb-badge {
  position: absolute;
  right: -5px;
  bottom: -3px;
  width: 16px;
  height: 16px;
  display: flex;
  align-items: center;
  justify-content: center;
  border-radius: 50%;
  font-size: 10px;
  color: #fff;
}

.tb-badge.ring {
  box-sizing: border-box;
  border: 1.5px solid #bfe3f5;
  color: #ec407a;
  font-size: 7px;
}

.tray {
  margin-left: auto;
  display: flex;
  align-items: center;
}

.tray-ic {
  width: 24px;
  display: flex;
  justify-content: center;
}

.lang {
  width: 34px;
  margin-right: 4px;
  text-align: center;
  font-size: 12px;
}

.clock {
  width: 60px;
  margin-right: 2px;
  text-align: center;
  font-size: 11.5px;
  line-height: 18px;
}

.notif {
  position: relative;
  width: 40px;
  display: flex;
  justify-content: center;
}

.notif-count {
  position: absolute;
  left: 19px;
  top: 7px;
  width: 14px;
  height: 14px;
  display: flex;
  align-items: center;
  justify-content: center;
  background: #333;
  border: 1px solid #aaa;
  border-radius: 50%;
  font-size: 10px;
  font-weight: 700;
  color: #ddd;
}

.show-desktop {
  width: 1px;
  height: 40px;
  margin: 0 4px 0 8px;
  background: #777;
}
</style>
